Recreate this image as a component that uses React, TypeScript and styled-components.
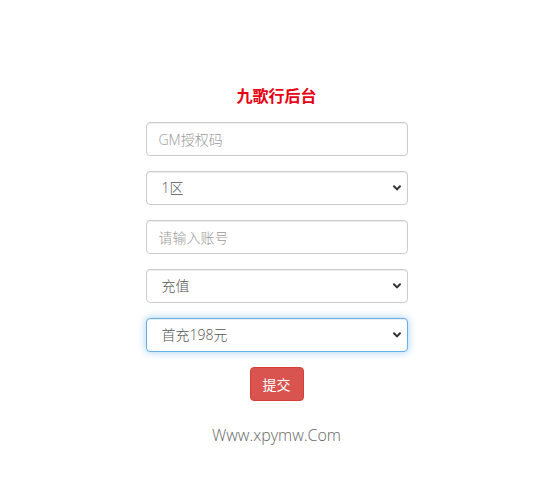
import React from "react";
import styled, { createGlobalStyle } from "styled-components";

const GlobalStyle = createGlobalStyle`
  body {
    margin: 0;
    background: #fff;
    font-family: "Noto Sans", "Noto Sans CJK SC", sans-serif;
  }
  * {
    box-sizing: border-box;
  }
`;

const Page = styled.div`
  width: 262px;
  margin: 0 auto;
  padding-top: 85px;
  display: flex;
  flex-direction: column;
  align-items: stretch;
`;

const Title = styled.h3`
  margin: 0 0 17px;
  font-size: 16px;
  line-height: 20px;
  font-weight: 700;
  color: #e60012;
  text-align: center;
  font-family: "Noto Sans CJK SC", sans-serif;
`;

const Form = styled.form`
  display: flex;
  flex-direction: column;
  gap: 15px;
  margin: 0;
`;

const controlStyle = `
  display: block;
  width: 100%;
  height: 34px;
  padding: 6px 12px;
  font-size: 14px;
  line-height: 20px;
  font-weight: 300;
  color: #555;
  background: #fff;
  border: 1px solid #ccc;
  border-radius: 4px;
  box-shadow: inset 0 1px 1px rgba(0, 0, 0, 0.075);
  font-family: "Open Sans", "Noto Sans CJK SC", sans-serif;
  outline: none;
`;

const Input = styled.input`
  ${controlStyle}
  &::placeholder {
    color: #999;
  }
`;

const SelectWrap = styled.div`
  position: relative;
`;

const Select = styled.select<{ $focused?: boolean }>`
  ${controlStyle}
  appearance: none;
  padding-left: 15px;
  border-color: ${(p) => (p.$focused ? "#66afe9" : "#ccc")};
  box-shadow: ${(p) =>
    p.$focused
      ? "inset 0 1px 1px rgba(0,0,0,.075), 0 0 8px rgba(102,175,233,.6)"
      : "inset 0 1px 1px rgba(0,0,0,.075)"};
`;

const Chevron = styled.svg`
  position: absolute;
  right: 7px;
  top: 14px;
  width: 8px;
  height: 6px;
  pointer-events: none;
`;

const ButtonRow = styled.div`
  display: flex;
  justify-content: center;
  margin-top: 15px;
`;

const SubmitButton = styled.button`
  padding: 6px 12px;
  font-size: 14px;
  line-height: 20px;
  color: #fff;
  background: #d9534f;
  border: 1px solid #d43f3a;
  border-radius: 4px;
  font-family: "Noto Sans CJK SC", sans-serif;
  cursor: pointer;
`;

const Footer = styled.p`
  margin: 24px 0 0;
  text-align: center;
  font-size: 16px;
  line-height: 20px;
  font-weight: 300;
  color: #666;
  font-family: "Open Sans", "Noto Sans", sans-serif;
`;

const SelectField: React.FC<{ options: string[]; focused?: boolean }> = ({
  options,
  focused
}) => (
  <SelectWrap>
    <Select $focused={focused} defaultValue={options[0]}>
      {options.map(o => (
        <option key={o}>{o}</option>
      ))}
    </Select>
    <Chevron viewBox="0 0 8 6">
      <path
        d="M1 1.2 L4 4.4 L7 1.2"
        fill="none"
        stroke="#333"
        strokeWidth="2"
        strokeLinecap="round"
        strokeLinejoin="round"
      />
    </Chevron>
  </SelectWrap>
);

export default function App() {
  return (
    <>
      <GlobalStyle />
      <Page>
        <Title>九歌行后台</Title>
        <Form onSubmit={e => e.preventDefault()}>
          <Input placeholder="GM授权码" />
          <SelectField options={["1区", "2区", "3区"]} />
          <Input placeholder="请输入账号" />
          <SelectField options={["充值", "邮件"]} />
          <SelectField options={["首充198元", "月卡30元"]} focused />
        </Form>
        <ButtonRow>
          <SubmitButton type="button">提交</SubmitButton>
        </ButtonRow>
        <Footer>Www.xpymw.Com</Footer>
      </Page>
    </>
  );
}
